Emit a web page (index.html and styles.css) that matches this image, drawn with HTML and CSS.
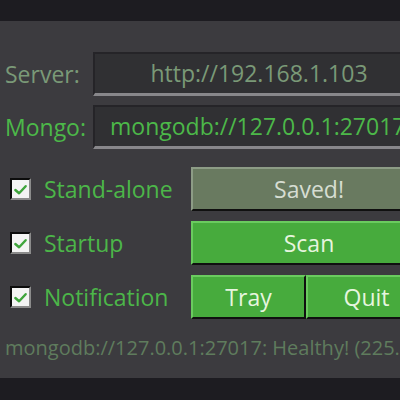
FILE: index.html
```html
<!DOCTYPE html>
<html>
<head>
<meta charset="utf-8">
<link rel="stylesheet" href="styles.css">
</head>
<body>
<div class="top"></div>
<div class="panel">
  <div class="field-row">
    <span class="label muted">Server:</span>
    <div class="input center muted">http://192.168.1.103</div>
  </div>
  <div class="field-row">
    <span class="label green">Mongo:</span>
    <div class="input left green">mongodb://127.0.0.1:27017</div>
  </div>
  <div class="controls">
    <label class="check-row">
      <span class="checkbox"><svg viewBox="0 0 16 16" width="15" height="15"><path d="M2.5 8.5 L6.5 12 L13.5 4.5" fill="none" stroke="#3fa53c" stroke-width="2.6" stroke-linecap="round" stroke-linejoin="round"/></svg></span>
      <span class="check-text">Stand-alone</span>
    </label>
    <div class="btn saved">Saved!</div>
    <label class="check-row">
      <span class="checkbox"><svg viewBox="0 0 16 16" width="15" height="15"><path d="M2.5 8.5 L6.5 12 L13.5 4.5" fill="none" stroke="#3fa53c" stroke-width="2.6" stroke-linecap="round" stroke-linejoin="round"/></svg></span>
      <span class="check-text">Startup</span>
    </label>
    <div class="btn go">Scan</div>
    <label class="check-row">
      <span class="checkbox"><svg viewBox="0 0 16 16" width="15" height="15"><path d="M2.5 8.5 L6.5 12 L13.5 4.5" fill="none" stroke="#3fa53c" stroke-width="2.6" stroke-linecap="round" stroke-linejoin="round"/></svg></span>
      <span class="check-text">Notification</span>
    </label>
    <div class="btn-pair">
      <div class="btn go">Tray</div>
      <div class="btn go">Quit</div>
    </div>
  </div>
  <div class="status">mongodb://127.0.0.1:27017: Healthy! (225.3ms)</div>
</div>
</body>
</html>
```
FILE: styles.css
```css
html, body {
  margin: 0;
  padding: 0;
}
body {
  width: 400px;
  height: 400px;
  background: #1d1c21;
  overflow: hidden;
  font-family: "Open Sans", "DejaVu Sans", sans-serif;
}
.top {
  height: 21px;
  background: #1d1c21;
}
.panel {
  height: 357px;
  background: #3c3b3f;
  box-sizing: border-box;
  padding: 31px 0 0 5px;
  overflow: hidden;
  white-space: nowrap;
}
.field-row {
  display: flex;
  align-items: center;
  height: 44px;
  margin-bottom: 9px;
}
.label {
  width: 88px;
  flex: none;
  font-size: 23px;
}
.muted { color: #7a9977; }
.green { color: #4cb849; }
.input {
  flex: none;
  width: 330px;
  height: 44px;
  box-sizing: border-box;
  background: #303033;
  border-top: 2px solid #252428;
  border-left: 2px solid #252428;
  border-bottom: 3px solid #88878b;
  font-size: 23px;
  line-height: 38px;
  overflow: hidden;
}
.input.center { text-align: center; }
.input.left { padding-left: 15px; }
.controls {
  display: grid;
  grid-template-columns: 186px 236px;
  grid-auto-rows: 44px;
  row-gap: 10px;
  margin-top: 18px;
}
.check-row {
  display: flex;
  align-items: center;
  padding-left: 5px;
  gap: 13px;
}
.checkbox {
  width: 21px;
  height: 22px;
  box-sizing: border-box;
  background: #f4f4f4;
  border-top: 2px solid #0c0c0c;
  border-left: 2px solid #0c0c0c;
  border-right: 2px solid #8b8b8b;
  border-bottom: 2px solid #8b8b8b;
  display: flex;
  align-items: center;
  justify-content: center;
  flex: none;
}
.check-text {
  color: #4cb649;
  font-size: 23px;
}
.btn {
  box-sizing: border-box;
  display: flex;
  align-items: center;
  justify-content: center;
  font-size: 23px;
  border-top: 2px solid;
  border-left: 2px solid;
  border-bottom: 2px solid #101010;
  border-right: 2px solid #101010;
}
.saved {
  background: #697a60;
  border-top-color: #8d9c86;
  border-left-color: #8d9c86;
  color: #d6ddd2;
}
.go {
  background: #47ab3d;
  border-top-color: #6acb5f;
  border-left-color: #6acb5f;
  color: #e6f5df;
}
.btn-pair {
  display: grid;
  grid-template-columns: 115px 121px;
}
.status {
  margin-top: 15px;
  font-size: 20px;
  line-height: 27px;
  color: #5f7c5d;
}
```
